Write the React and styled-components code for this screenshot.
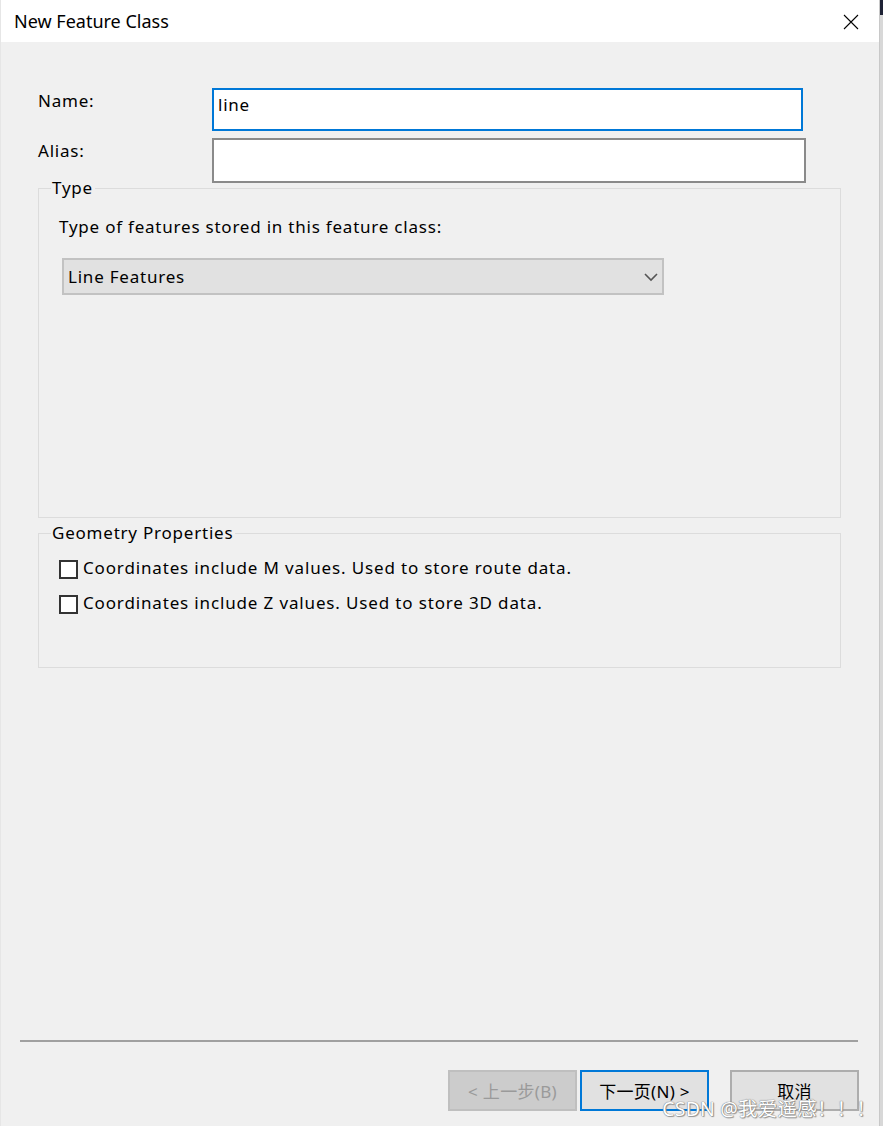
import React from "react";
import styled, { createGlobalStyle } from "styled-components";

const GlobalStyle = createGlobalStyle`
    html, body {
        margin: 0;
        padding: 0;
        background: #f0f0f0;
    }
    body {
        font-family: "Noto Sans", "Noto Sans CJK SC", sans-serif;
        color: #000;
    }
`;

const Screen = styled.div`
    display: flex;
    height: 1126px;
    overflow: hidden;
`;

const BackEdge = styled.div`
    width: ${(props) => props.w}px;
    flex-shrink: 0;
    background: ${(props) => (props.dark ? "linear-gradient(#1e2235 0 15px, #d8d8d8 15px)" : "#e6e6e6")};
`;

const Dialog = styled.div`
    width: 878px;
    flex-shrink: 0;
    display: flex;
    flex-direction: column;
    background: #f0f0f0;
    border-right: 1px solid #c8c8c8;
    font-size: 17px;
    letter-spacing: 0.78px;
`;

const TitleBar = styled.div`
    height: 42px;
    background: #fff;
    display: flex;
    align-items: center;
    justify-content: space-between;
    padding: 0 20px 0 13px;
    font-size: 18px;
    letter-spacing: 0;
    flex-shrink: 0;
`;

const CloseButton = styled.div`
    width: 16px;
    height: 16px;
    display: flex;
    margin-top: 1px;
`;

const Body = styled.div`
    flex: 1;
    padding: 46px 38px 0 37px;
    display: flex;
    flex-direction: column;
`;

const FieldRow = styled.div`
    display: grid;
    grid-template-columns: 174px ${(props) => props.w}px;
    margin-bottom: ${(props) => props.mb || 0}px;
`;

const Label = styled.div`
    padding-top: ${(props) => props.pt}px;
    line-height: 20px;
`;

const TextBox = styled.div`
    height: ${(props) => props.h}px;
    box-sizing: border-box;
    background: #fff;
    border: ${(props) => (props.focused ? "2px solid #0078d7" : "2px solid #8a8a8a")};
    padding: 3px 4px;
    line-height: 24px;
`;

const GroupBox = styled.fieldset`
    margin: ${(props) => props.mt}px 0 0 0;
    border: 1px solid #dcdcdc;
    padding: 0 20px 0 20px;
    height: ${(props) => props.h}px;
    box-sizing: border-box;
    min-width: 0;
`;

const Legend = styled.legend`
    line-height: 18px;
    padding: 0 2px 0 1px;
    margin-left: -8px;
`;

const Hint = styled.div`
    line-height: 20px;
    margin-top: 20px;
`;

const Select = styled.div`
    margin: 21px 0 0 3px;
    width: 602px;
    height: 37px;
    box-sizing: border-box;
    background: #e1e1e1;
    border: 2px solid #c2c2c2;
    display: flex;
    align-items: center;
    justify-content: space-between;
    padding: 0 4px 0 4px;
`;

const CheckRow = styled.label`
    display: flex;
    align-items: center;
    gap: 5px;
    line-height: 20px;
    letter-spacing: 0.85px;
    margin-top: ${(props) => props.mt}px;
`;

const Box = styled.span`
    width: 19px;
    height: 19px;
    box-sizing: border-box;
    border: 2px solid #333;
    background: #fff;
    flex-shrink: 0;
    margin-top: 4px;
`;

const Footer = styled.div`
    position: relative;
    padding: 0 20px 15px 19px;
    flex-shrink: 0;
`;

const Separator = styled.div`
    height: 2px;
    background: #a0a0a0;
    margin-right: 1px;
`;

const ButtonBar = styled.div`
    display: flex;
    justify-content: flex-end;
    margin-top: 28px;
    gap: 3px;
`;

const Button = styled.div`
    width: 129px;
    height: 41px;
    box-sizing: border-box;
    display: flex;
    align-items: center;
    justify-content: center;
    letter-spacing: 0.3px;
    background: ${(props) => (props.disabled ? "#cccccc" : "#e1e1e1")};
    color: ${(props) => (props.disabled ? "#9a9a9a" : "#000")};
    border: 2px solid ${(props) => (props.primary ? "#0078d7" : props.disabled ? "#bfbfbf" : "#adadad")};
    margin-left: ${(props) => props.ml || 0}px;
`;

const Watermark = styled.div`
    position: absolute;
    right: 3px;
    bottom: 4px;
    font-size: 19.5px;
    color: #fff;
    letter-spacing: 0.2px;
    text-shadow: 0 0 1px #777, 0 0 1px #777, 1px 1px 1px #999;
`;

function App() {
    return (
        <Screen>
            <GlobalStyle />
            <BackEdge w={1} />
            <Dialog>
                <TitleBar>
                    <span>New Feature Class</span>
                    <CloseButton>
                        <svg width="16" height="16" viewBox="0 0 16 16">
                            <path d="M1 1 L15 15 M15 1 L1 15" stroke="#000" strokeWidth="1.1" fill="none" />
                        </svg>
                    </CloseButton>
                </TitleBar>
                <Body>
                    <FieldRow w={591} mb={7}>
                        <Label pt={3}>Name:</Label>
                        <TextBox h={43} focused>
                            line
                        </TextBox>
                    </FieldRow>
                    <FieldRow w={594}>
                        <Label pt={3}>Alias:</Label>
                        <TextBox h={45} />
                    </FieldRow>
                    <GroupBox mt={-4} h={339}>
                        <Legend>Type</Legend>
                        <Hint>Type of features stored in this feature class:</Hint>
                        <Select>
                            <span>Line Features</span>
                            <svg width="14" height="10" viewBox="0 0 14 10">
                                <polyline points="1,2 7,8 13,2" stroke="#555" strokeWidth="1.6" fill="none" />
                            </svg>
                        </Select>
                    </GroupBox>
                    <GroupBox mt={6} h={144}>
                        <Legend>Geometry Properties</Legend>
                        <CheckRow mt={14}>
                            <Box />
                            Coordinates include M values. Used to store route data.
                        </CheckRow>
                        <CheckRow mt={12}>
                            <Box />
                            Coordinates include Z values. Used to store 3D data.
                        </CheckRow>
                    </GroupBox>
                </Body>
                <Footer>
                    <Separator />
                    <ButtonBar>
                        <Button disabled>&lt; 上一步(B)</Button>
                        <Button primary>下一页(N) &gt;</Button>
                        <Button ml={18}>取消</Button>
                    </ButtonBar>
                    <Watermark>CSDN @我爱遥感！！！</Watermark>
                </Footer>
            </Dialog>
            <BackEdge w={4} dark />
        </Screen>
    );
}

export default App;
